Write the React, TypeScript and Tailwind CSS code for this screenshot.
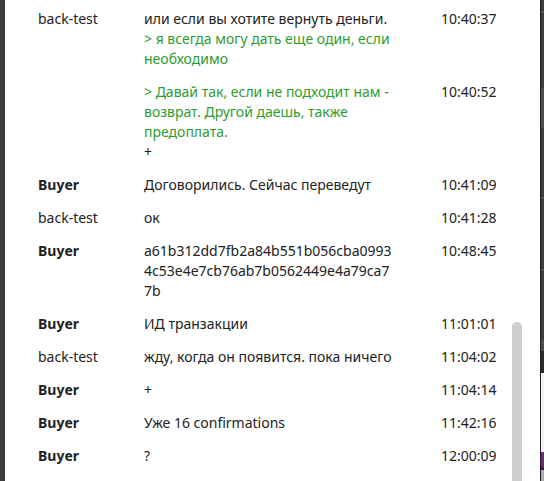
type Msg = {
  from: string;
  buyer?: boolean;
  hash?: boolean;
  time: string;
  lines: { text: string; quote?: boolean }[];
};

const messages: Msg[] = [
  {
    from: "back-test",
    time: "10:40:37",
    lines: [
      { text: "или если вы хотите вернуть деньги." },
      { text: "> я всегда могу дать еще один, если необходимо", quote: true },
    ],
  },
  {
    from: "",
    time: "10:40:52",
    lines: [
      {
        text: "> Давай так, если не подходит нам - возврат. Другой даешь, также предоплата.",
        quote: true,
      },
      { text: "+" },
    ],
  },
  { from: "Buyer", buyer: true, time: "10:41:09", lines: [{ text: "Договорились. Сейчас переведут" }] },
  { from: "back-test", time: "10:41:28", lines: [{ text: "ок" }] },
  {
    from: "Buyer",
    buyer: true,
    hash: true,
    time: "10:48:45",
    lines: [{ text: "a61b312dd7fb2a84b551b056cba09934c53e4e7cb76ab7b0562449e4a79ca77b" }],
  },
  { from: "Buyer", buyer: true, time: "11:01:01", lines: [{ text: "ИД транзакции" }] },
  { from: "back-test", time: "11:04:02", lines: [{ text: "жду, когда он появится. пока ничего" }] },
  { from: "Buyer", buyer: true, time: "11:04:14", lines: [{ text: "+" }] },
  { from: "Buyer", buyer: true, time: "11:42:16", lines: [{ text: "Уже 16 confirmations" }] },
  { from: "Buyer", buyer: true, time: "12:00:09", lines: [{ text: "?" }] },
];

// strip of the neighbouring window at the right edge
const edge: [number, string][] = [
  [11, "#3a3d42"],
  [2, "#50545a"],
  [75, "#3a3d42"],
  [40, "#4b4f55"],
  [69, "#3a3d42"],
  [2, "#50545a"],
  [70, "#3a3d42"],
  [2, "#50545a"],
  [69, "#3a3d42"],
  [11, "#4b4f55"],
  [22, "#2b2b2b"],
  [79, "#f4f4f4"],
  [15, "#6b2d74"],
  [3, "#3a2040"],
  [11, "#a8aeb3"],
];

export default function App() {
  return (
    <div className="flex h-[481px] w-[544px] overflow-hidden bg-white font-['Noto_Sans',sans-serif] text-[14px] leading-5 text-[#222]">
      <div className="w-[5px] shrink-0 bg-[#3c3c3c]" />
      <div className="flex-1 pl-[33px] pt-[2px]">
        {messages.map((m, i) => (
          <div key={i} className="grid grid-cols-[106px_250px_1fr] py-[6.5px]">
            <div className={m.buyer ? "font-bold" : ""}>{m.from}</div>
            <div className={m.hash ? "break-all" : ""}>
              {m.lines.map((l, j) => (
                <div key={j} className={l.quote ? "text-[#2e9c2e]" : ""}>
                  {l.text}
                </div>
              ))}
            </div>
            <div className="pl-[47px]">{m.time}</div>
          </div>
        ))}
      </div>
      <div className="mr-[18px] w-[10px] shrink-0 pt-[322px]">
        <div className="h-full rounded-t-[5px] bg-[#cdcdcd]" />
      </div>
      <div className="w-px shrink-0 bg-[#1f1f1f]" />
      <div className="flex w-[3px] shrink-0 flex-col">
        {edge.map(([h, c], i) => (
          <div key={i} className="shrink-0" style={{ height: h, background: c }} />
        ))}
      </div>
    </div>
  );
}
